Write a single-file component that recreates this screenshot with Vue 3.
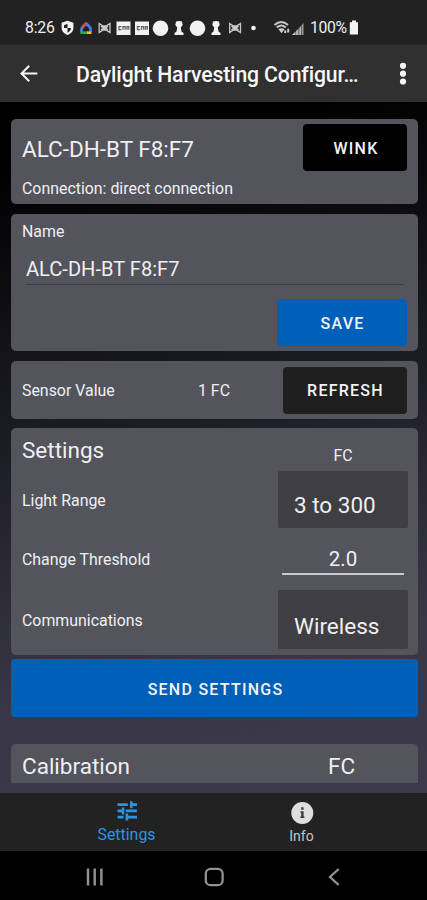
<script setup>
import { ref } from 'vue'

const name = ref('ALC-DH-BT F8:F7')
const threshold = ref('2.0')
</script>

<template>
  <div class="screen">
    <header class="status">
      <span class="clock">8:26</span>
      <svg class="notifs" width="200" height="20" viewBox="0 0 200 20">
        <!-- shield -->
        <path d="M7.500 2.800 13.400 4.800v5c0 3.400-2.400 6-5.900 7.300-3.500-1.300-5.900-3.900-5.900-7.300v-5z" fill="#f2f2f2" />
        <path d="M7.500 5.800v4.200H4V7.200zM7.500 10H11c0 2-1.400 3.700-3.500 4.800z" fill="#222" />
        <!-- home -->
        <path d="M21.500 14.500v-4L26 5.800" fill="none" stroke="#4a86e8" stroke-width="2.600" />
        <path d="M22 9.500 26 5.300l2 2" fill="none" stroke="#e04a3c" stroke-width="2.600" />
        <path d="M26.500 5.600 30.500 10v4" fill="none" stroke="#3f80ee" stroke-width="2.600" />
        <path d="M20.500 14.700H28" stroke="#33a853" stroke-width="2.600" />
        <path d="M27 14.700h4.500" stroke="#f2bd2b" stroke-width="2.600" />
        <!-- bow -->
        <g id="bow" fill="none" stroke="#c8c8c8" stroke-width="1.300">
          <path d="M39.200 5.500 43 8h3l4-2.500v9L46 12h-3l-3.800 2.500zM41 8l2 2-2 2M48 8l-2 2 2 2M43 8l3 4M46 8l-3 4" />
        </g>
        <rect x="56.500" y="3.500" width="14" height="13.500" fill="#f2f2f2" />
        <path d="M61.500 8.700H59v3h2.500M63 11.700v-3h2.200v3M67 11.700v-3h1.800v3" fill="none" stroke="#666" stroke-width="1.300" />
        <rect x="75" y="3.500" width="14" height="13.500" fill="#f2f2f2" />
        <path d="M80 8.700h-2.500v3H80M81.500 11.700v-3h2.200v3M85.500 11.700v-3h1.800v3" fill="none" stroke="#666" stroke-width="1.300" />
        <circle cx="100.500" cy="10.200" r="7.800" fill="#f2f2f2" />
        <path id="pawn" d="M116 3.500q3-1 6 0l.7 3.500-1.900 2.500.7 4 2 1.500v2h-9v-2l2-1.500.7-4L115.300 7z" fill="#f2f2f2" />
        <circle cx="137.500" cy="10.200" r="7.800" fill="#f2f2f2" />
        <use href="#pawn" x="37" />
        <use href="#bow" x="130.500" />
        <circle cx="193.500" cy="10" r="2.300" fill="#f2f2f2" />
      </svg>
      <svg class="signal" width="34" height="20" viewBox="0 0 34 20">
        <path d="M1.500 7Q8.300 1 15 7M3.800 9.500q4.500-4 9 0" fill="none" stroke="#c6c6c6" stroke-width="2.100" />
        <path d="m5.500 11.300 3 4 3-4q-3-2.200-6 0z" fill="#cfcfcf" />
        <path d="M12.200 15v-2.500M15.200 10.800V14.500" stroke="#cfcfcf" stroke-width="2" />
        <path d="M19 17 22.500 13.500V17z" fill="#cfcfcf" />
        <path d="M23 13v4h2.600v-6.500zM26.200 10v7h1.800V8z" fill="#b5b5b5" />
        <path d="M28.500 7.400V17H30.500V5z" fill="#999" />
      </svg>
      <span class="percent">100%</span>
      <svg width="10" height="16" viewBox="0 0 10 16">
        <path d="M3 .5h4V2.200h2V14.500H.8V2.200H3z" fill="#f5f5f5" />
      </svg>
    </header>

    <header class="appbar">
      <svg width="20" height="20" viewBox="0 0 20 20">
        <path d="M18.300 9.500H3M10.200 1.800 2.500 9.500l7.700 7.700" fill="none" stroke="#f5f5f5" stroke-width="2" />
      </svg>
      <h1>Daylight Harvesting Configur…</h1>
      <svg width="8" height="24" viewBox="0 0 8 24" fill="#f5f5f5">
        <circle cx="4" cy="3.800" r="3.100" /><circle cx="4" cy="11.700" r="3.100" /><circle cx="4" cy="19.500" r="3.100" />
      </svg>
    </header>

    <main class="content">
      <section class="card device">
        <div class="between">
          <h2>ALC-DH-BT F8:F7</h2>
          <button class="btn wink">WINK</button>
        </div>
        <p>Connection: direct connection</p>
      </section>

      <section class="card naming">
        <label>Name</label>
        <input v-model="name" class="name-input" />
        <button class="btn save">SAVE</button>
      </section>

      <section class="card sensor">
        <span class="grow">Sensor Value</span>
        <span class="reading">1 FC</span>
        <button class="btn refresh">REFRESH</button>
      </section>

      <section class="card settings">
        <div class="labels">
          <h2>Settings</h2>
          <span class="l-range">Light Range</span>
          <span class="l-threshold">Change Threshold</span>
          <span class="l-comm">Communications</span>
        </div>
        <div class="values">
          <span class="unit">FC</span>
          <div class="select range">3 to 300</div>
          <input v-model="threshold" class="threshold" />
          <div class="select comm">Wireless</div>
        </div>
      </section>

      <button class="btn send">SEND SETTINGS</button>

      <section class="card calibration">
        <h2>Calibration</h2>
        <h2 class="cal-unit">FC</h2>
      </section>
    </main>

    <nav class="tabs">
      <a class="tab active">
        <svg width="24" height="24" viewBox="0 0 24 24" fill="#2b95e0">
          <path d="M2.500 16.800v2.600h6v-2.600zM2.500 4.300v2.600h10.300V4.300zM13.200 21.500v-2.100h8.800v-2.600h-8.800v-2.300h-2.600v7zM6.800 8.600v2H2.500v2.600h4.300v2.200h2.500V8.600zM22 13.200v-2.600H10.800v2.600zM15 9.200h2.600V6.900H22V4.300h-4.400v-2H15z" />
        </svg>
        <span>Settings</span>
      </a>
      <a class="tab info">
        <svg width="24" height="24" viewBox="0 0 24 24">
          <circle cx="12.300" cy="12" r="11" fill="#dedede" />
          <path d="M11.200 6.200h2.400v2.500h-2.400zM10.400 10.300h3.200v5.200h.8V17h-4v-1.500h.8v-3.700h-.8z" fill="#3a3a3a" />
        </svg>
        <span>Info</span>
      </a>
    </nav>

    <footer class="system">
      <svg width="20" height="20" viewBox="0 0 20 20" stroke="#929292" stroke-width="2.400">
        <path d="M4 1.500v17M10.700 1.500v17M17.400 1.500v17" />
      </svg>
      <svg width="20" height="20" viewBox="0 0 20 20">
        <rect x="1.800" y="1.800" width="16.800" height="16.400" rx="4.800" fill="none" stroke="#929292" stroke-width="2.300" />
      </svg>
      <svg width="20" height="20" viewBox="0 0 20 20">
        <path d="M14.700 2 6 10l8.700 8" fill="none" stroke="#929292" stroke-width="2.300" />
      </svg>
    </footer>
  </div>
</template>

<style>
body { margin: 0; background: #000; }
</style>

<style scoped>
* { box-sizing: border-box; }
.screen {
  width: 427px; height: 900px; overflow: hidden;
  display: flex; flex-direction: column;
  font-family: Roboto, sans-serif; font-size: 15.900px; color: #efeff2;
}
h1, h2, p { margin: 0; font-weight: 400; }
h2 { font-size: 22.500px; line-height: 26px; }
svg { display: block; flex: none; }
input, button { font-family: inherit; color: inherit; border: 0; outline: 0; margin: 0; padding: 0; }

.status { height: 45px; flex: none; background: #222; display: flex; align-items: center; padding: 10px 0 0 25px; }
.clock { width: 35px; font-size: 15.800px; letter-spacing: -.2px; }
.notifs { width: 200px; }
.signal { margin-left: 13px; }
.percent { width: 39px; margin-left: 3px; font-size: 15.800px; letter-spacing: -.4px; }

.appbar { height: 57px; flex: none; background: #303030; display: flex; align-items: center; padding: 0 20px 0 19px; }
.appbar h1 { flex: 1; margin-left: 37px; font-size: 21.200px; letter-spacing: -.13px; font-weight: 500; line-height: 28px; white-space: nowrap; color: #f7f7f7; padding-top: 2px; }

.content {
  height: 691px; flex: none; padding: 17px 9px 0 11px;
  display: flex; flex-direction: column;
  background: linear-gradient(168deg, #000 8%, #1d1d26 45%, #393746 78%, #3d3b4b 100%);
}
.card { flex: none; background: #54545d; border-radius: 5px; padding: 0 11px; }
.btn { border-radius: 4px; font-size: 16px; font-weight: 500; letter-spacing: 1.250px; text-align: center; color: #f3f3f5; }

.device { height: 85px; padding-top: 5px; }
.between { display: flex; justify-content: space-between; }
.device h2 { padding-top: 12px; }
.wink { width: 104px; height: 47px; background: #000; padding: 2px 0 0 2px; }
.device p { line-height: 20px; margin-top: 8px; }

.naming { height: 137px; margin-top: 10px; display: flex; flex-direction: column; padding-top: 8px; }
.naming label { line-height: 20px; }
.name-input { height: 32px; margin: 11px 3px 0 4px; background: none; font-size: 20.100px; border-bottom: 1px solid #3e3e45; padding-top: 1px; }
.save { width: 130px; height: 47px; margin-top: 14px; align-self: flex-end; background: #005fb9; padding: 2px 0 0 1px; }

.sensor { height: 58px; margin-top: 10px; display: flex; align-items: center; }
.grow, .reading { padding-top: 1px; }
.grow { width: 176px; }
.reading { width: 85px; }
.refresh { width: 124px; height: 47px; background: #1f1f1f; padding: 1px 0 0 1px; }

.settings { height: 227px; margin-top: 9px; display: flex; justify-content: space-between; padding-right: 10px; }
.labels, .values { display: flex; flex-direction: column; }
.labels span { line-height: 20px; }
.labels h2 { margin-top: 9px; }
.l-range { margin-top: 28px; }
.l-threshold { margin-top: 39px; }
.l-comm { margin-top: 41px; }
.values { width: 130px; }
.unit { margin-top: 18px; line-height: 20px; text-align: center; }
.select { background: #3f3f43; padding-left: 16px; font-size: 22.500px; border-radius: 2px; }
.range { height: 57px; margin-top: 5px; line-height: 68px; }
.threshold { width: 122px; height: 31px; margin: 16px 4px 0; background: none; text-align: center; font-size: 20.500px; border-bottom: 2px solid #c9c9ce; }
.comm { height: 59px; margin-top: 15px; line-height: 72px; }

.send { flex: none; height: 58px; margin-top: 4px; background: #005fb9; padding: 2px 0 0 2px; }

.calibration { height: 39px; margin-top: 27px; padding-top: 9px; border-radius: 5px 5px 0 0; display: flex; justify-content: space-between; }
.cal-unit { width: 79px; }

.tabs { height: 58px; flex: none; background: #222; display: flex; justify-content: center; padding-left: 1px; }
.tab { width: 175px; padding-top: 6px; display: flex; flex-direction: column; align-items: center; }
.tab span { line-height: 20px; }
.active span { color: #2b95e0; margin-top: 2px; }
.info { padding-top: 8px; color: #c4c4c4; font-size: 14px; }
.info span { margin-top: 1px; }

.system { height: 49px; flex: none; background: #000; display: flex; align-items: center; gap: 100px; padding: 3px 0 0 84px; }
</style>
